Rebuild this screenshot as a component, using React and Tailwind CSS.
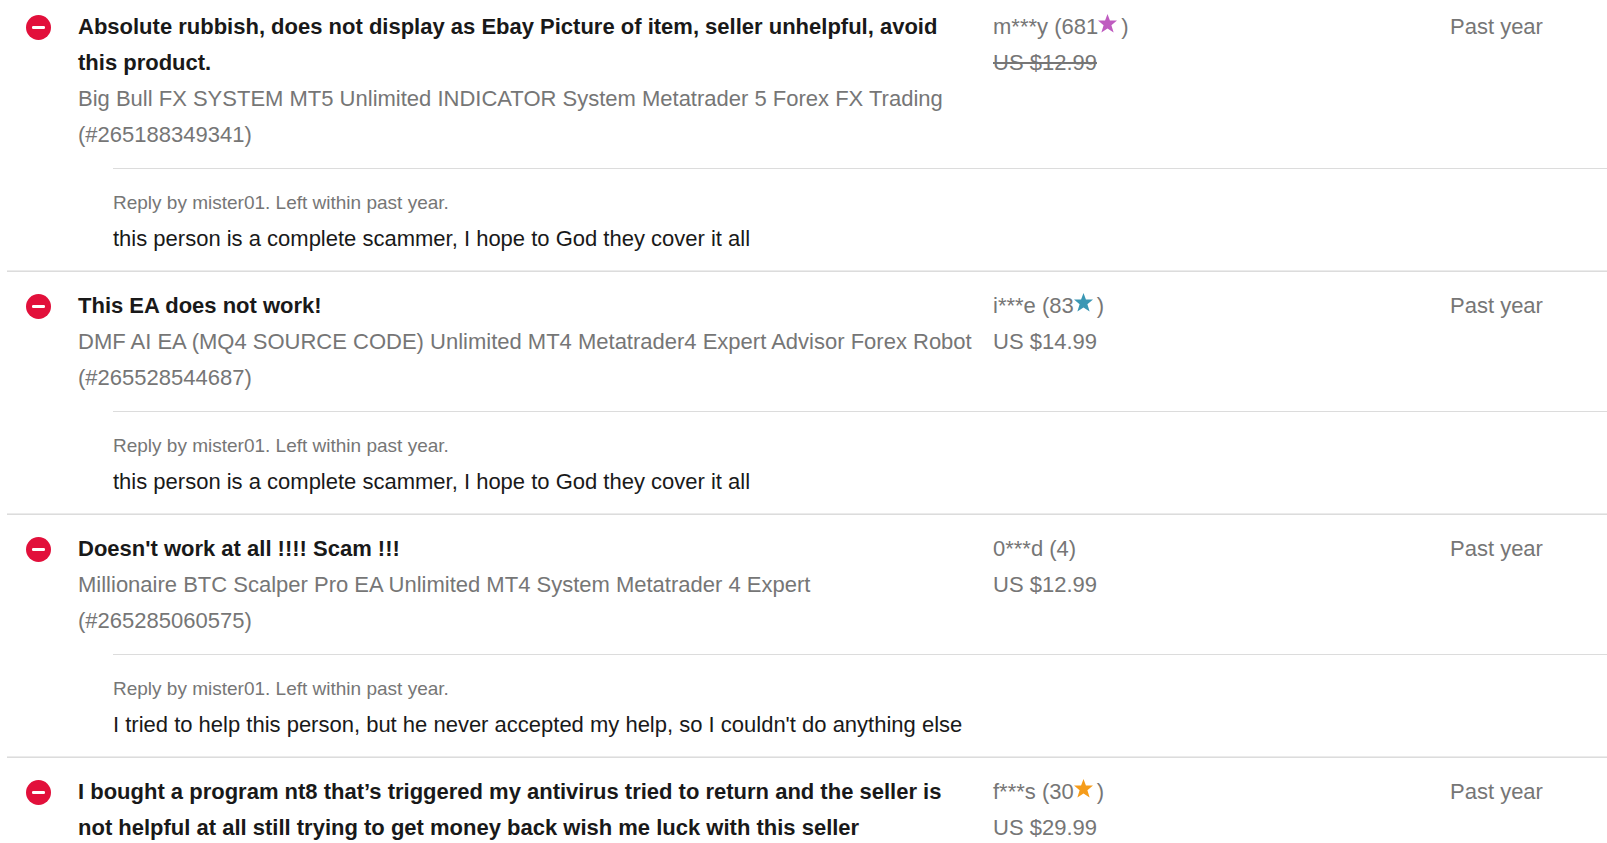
const feedback = [
  {
    id: 1,
    comment: 'Absolute rubbish, does not display as Ebay Picture of item, seller unhelpful, avoid this product.',
    item: 'Big Bull FX SYSTEM MT5 Unlimited INDICATOR System Metatrader 5 Forex FX Trading (#265188349341)',
    buyer: 'm***y',
    score: 681,
    star: 'text-[#bf5cc0]',
    price: 'US $12.99',
    refunded: true,
    when: 'Past year',
    reply: 'this person is a complete scammer, I hope to God they cover it all',
  },
  {
    id: 2,
    comment: 'This EA does not work!',
    item: 'DMF AI EA (MQ4 SOURCE CODE) Unlimited MT4 Metatrader4 Expert Advisor Forex Robot (#265528544687)',
    buyer: 'i***e',
    score: 83,
    star: 'text-[#3a97b4]',
    price: 'US $14.99',
    when: 'Past year',
    reply: 'this person is a complete scammer, I hope to God they cover it all',
  },
  {
    id: 3,
    comment: "Doesn't work at all !!!! Scam !!!",
    item: 'Millionaire BTC Scalper Pro EA Unlimited MT4 System Metatrader 4 Expert (#265285060575)',
    buyer: '0***d',
    score: 4,
    price: 'US $12.99',
    when: 'Past year',
    reply: "I tried to help this person, but he never accepted my help, so I couldn't do anything else",
  },
  {
    id: 4,
    comment: 'I bought a program nt8 that’s triggered my antivirus tried to return and the seller is not helpful at all still trying to get money back wish me luck with this seller',
    buyer: 'f***s',
    score: 30,
    star: 'text-[#f59c1a]',
    price: 'US $29.99',
    when: 'Past year',
  },
];

function NegativeIcon() {
  return (
    <svg viewBox="0 0 25 25" className="mt-1.5 size-[25px]" role="img" aria-label="Negative feedback">
      <circle cx="12.5" cy="12.5" r="12.5" fill="#e2103b" />
      <rect x="6" y="11" width="13" height="3" rx="1.2" fill="#fff" />
    </svg>
  );
}

function Star({ className }) {
  return (
    <svg viewBox="0 0 18 18" className={`inline-block size-[19px] mr-1 mb-2.5 align-middle ${className}`} aria-hidden="true">
      <path
        d="M9 0L11.3 6.2H18L12.7 10.6L14.8 17.6L9 13.7L3.2 17.6L5.3 10.6L0 6.2H6.7Z"
        fill="currentColor"
      />
    </svg>
  );
}

function FeedbackEntry({ entry, first }) {
  const top = first ? 'pt-[9px]' : 'border-t border-[#dcdcdc] pt-4';

  return (
    <tbody className="align-top">
      <tr>
        <td className={`${top} pl-[19px]`}>
          <NegativeIcon />
        </td>
        <td className={`${top} pr-5`}>
          <p className="font-bold text-[#191919]">{entry.comment}</p>
          {entry.item && <p>{entry.item}</p>}
        </td>
        <td className={top}>
          <div className="h-9">
            {entry.buyer} ({entry.score}
            {entry.star && <Star className={entry.star} />})
          </div>
          <div className={entry.refunded ? 'line-through' : ''}>{entry.price}</div>
        </td>
        <td className={top}>{entry.when}</td>
      </tr>
      {entry.reply && (
        <tr>
          <td className="border-b border-[#ebebeb]"></td>
          <td colSpan={3} className="border-b border-[#ebebeb] pt-[15px] pb-[13px] pl-[35px]">
            <div className="border-t border-[#dcdcdc] pt-4">
              <p className="text-[19px] leading-9">Reply by mister01. Left within past year.</p>
              <p className="text-[#191919]">{entry.reply}</p>
            </div>
          </td>
        </tr>
      )}
    </tbody>
  );
}

export default function App() {
  return (
    <main className="h-screen overflow-hidden bg-white pl-[7px] font-['Liberation_Sans',Arial,sans-serif] text-[22px] leading-9 text-[#767676]">
      <table className="w-full table-fixed border-separate border-spacing-0">
        <colgroup>
          <col className="w-[71px]" />
          <col />
          <col className="w-[457px]" />
          <col className="w-[157px]" />
        </colgroup>
        {feedback.map((entry, i) => (
          <FeedbackEntry key={entry.id} entry={entry} first={i === 0} />
        ))}
      </table>
    </main>
  );
}
